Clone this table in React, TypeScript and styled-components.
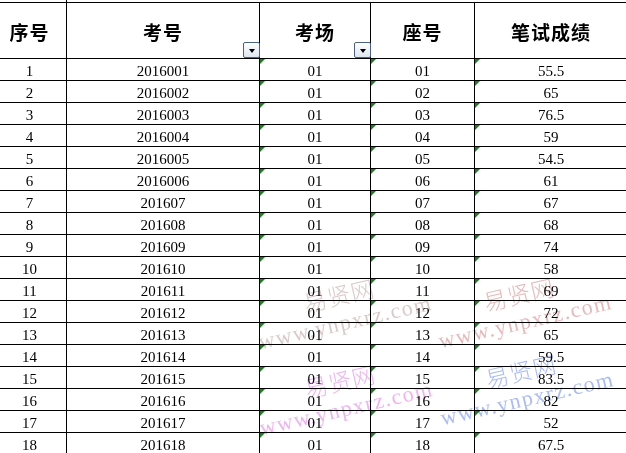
import React from 'react';
import styled, { createGlobalStyle } from 'styled-components';

const Global = createGlobalStyle`
  html, body { margin: 0; padding: 0; background: #fff; overflow: hidden; }
  body { width: 626px; height: 453px; }
`;

const Page = styled.div`
  position: relative;
  width: 626px;
  height: 453px;
  overflow: hidden;
  background: #fff;
`;

const Sheet = styled.table`
  border-collapse: collapse;
  table-layout: fixed;
  margin-left: -8px;
  width: 635px;
  font-family: "Liberation Serif", "Times New Roman", serif;
  color: #000;
`;

const Col = styled.col<{ $w: number }>`
  width: ${(p) => p.$w}px;
`;

const GhostRow = styled.tr`
  height: 2px;
`;

const GhostCell = styled.td<{ $edge?: boolean }>`
  padding: 0;
  height: 2px;
  line-height: 0;
  font-size: 0;
  border: none;
  border-right: ${(p) => (p.$edge ? '1px solid #000' : 'none')};
`;

const HeadCell = styled.th`
  position: relative;
  height: 53px;
  padding: 2px 0 0 0;
  border: 1px solid #000;
  text-align: center;
  vertical-align: middle;
  font-family: "Noto Sans CJK SC", "Noto Sans", sans-serif;
  font-weight: 700;
  font-size: 19px;
  letter-spacing: 1px;
  line-height: 24px;
`;

const FilterButton = styled.span`
  position: absolute;
  right: -1px;
  bottom: 0;
  width: 15px;
  height: 14px;
  border: 1px solid #4a6285;
  border-radius: 2px;
  background: linear-gradient(#ffffff, #dfe6ef);
  display: flex;
  align-items: center;
  justify-content: center;
  &::after {
    content: '';
    border-style: solid;
    border-width: 4px 3.5px 0 3.5px;
    border-color: #000 transparent transparent transparent;
    margin-top: 1px;
  }
`;

const Cell = styled.td<{ $flag?: boolean }>`
  position: relative;
  height: 19px;
  padding: 2px 0 0 0;
  border: 1px solid #000;
  text-align: center;
  vertical-align: middle;
  font-size: 15px;
  line-height: 18px;
  white-space: nowrap;
  &::before {
    content: '';
    display: ${(p) => (p.$flag ? 'block' : 'none')};
    position: absolute;
    left: 0;
    top: 0;
    width: 0;
    height: 0;
    border-style: solid;
    border-width: 5px 5px 0 0;
    border-color: #1d7f1d transparent transparent transparent;
  }
`;

const Overlay = styled.div`
  position: absolute;
  inset: 0;
  pointer-events: none;
  mix-blend-mode: multiply;
`;

const Watermark = styled.div<{ $color: string }>`
  position: absolute;
  transform: translate(-50%, -50%) rotate(-13deg);
  display: flex;
  flex-direction: column;
  align-items: center;
  gap: 4px;
  color: ${(p) => p.$color};
  white-space: nowrap;
`;

const MarkName = styled.span`
  font-family: "Noto Sans CJK SC", sans-serif;
  font-weight: 300;
  font-size: 23px;
  line-height: 26px;
  letter-spacing: 1px;
`;

const MarkUrl = styled.span`
  font-family: "Liberation Serif", serif;
  font-size: 22px;
  line-height: 24px;
  letter-spacing: 1.5px;
`;

type Row = [string, string, string, string, string];

const rows: Row[] = [
  ['1', '2016001', '01', '01', '55.5'],
  ['2', '2016002', '01', '02', '65'],
  ['3', '2016003', '01', '03', '76.5'],
  ['4', '2016004', '01', '04', '59'],
  ['5', '2016005', '01', '05', '54.5'],
  ['6', '2016006', '01', '06', '61'],
  ['7', '201607', '01', '07', '67'],
  ['8', '201608', '01', '08', '68'],
  ['9', '201609', '01', '09', '74'],
  ['10', '201610', '01', '10', '58'],
  ['11', '201611', '01', '11', '69'],
  ['12', '201612', '01', '12', '72'],
  ['13', '201613', '01', '13', '65'],
  ['14', '201614', '01', '14', '59.5'],
  ['15', '201615', '01', '15', '83.5'],
  ['16', '201616', '01', '16', '82'],
  ['17', '201617', '01', '17', '52'],
  ['18', '201618', '01', '18', '67.5'],
];

const marks = [
  { x: 342, y: 308, color: 'rgb(218, 202, 202)' },
  { x: 522, y: 307, color: 'rgb(230, 186, 186)' },
  { x: 343, y: 394, color: 'rgb(238, 180, 242)' },
  { x: 524, y: 384, color: 'rgb(170, 188, 246)' },
];

export default function App() {
  return (
    <Page>
      <Global />
      <Sheet>
        <colgroup>
          <Col $w={74} />
          <Col $w={193} />
          <Col $w={111} />
          <Col $w={104} />
          <Col $w={153} />
        </colgroup>
        <thead>
          <GhostRow>
            <GhostCell $edge />
            <GhostCell />
            <GhostCell />
            <GhostCell />
            <GhostCell />
          </GhostRow>
          <tr>
            <HeadCell>序号</HeadCell>
            <HeadCell>
              考号
              <FilterButton />
            </HeadCell>
            <HeadCell>
              考场
              <FilterButton />
            </HeadCell>
            <HeadCell>座号</HeadCell>
            <HeadCell>笔试成绩</HeadCell>
          </tr>
        </thead>
        <tbody>
          {rows.map((r) => (
            <tr key={r[0]}>
              <Cell>{r[0]}</Cell>
              <Cell>{r[1]}</Cell>
              <Cell $flag>{r[2]}</Cell>
              <Cell $flag>{r[3]}</Cell>
              <Cell $flag>{r[4]}</Cell>
            </tr>
          ))}
        </tbody>
      </Sheet>
      <Overlay>
        {marks.map((m, i) => (
          <Watermark key={i} $color={m.color} style={{ left: m.x, top: m.y }}>
            <MarkName>易贤网</MarkName>
            <MarkUrl>www.ynpxrz.com</MarkUrl>
          </Watermark>
        ))}
      </Overlay>
    </Page>
  );
}
